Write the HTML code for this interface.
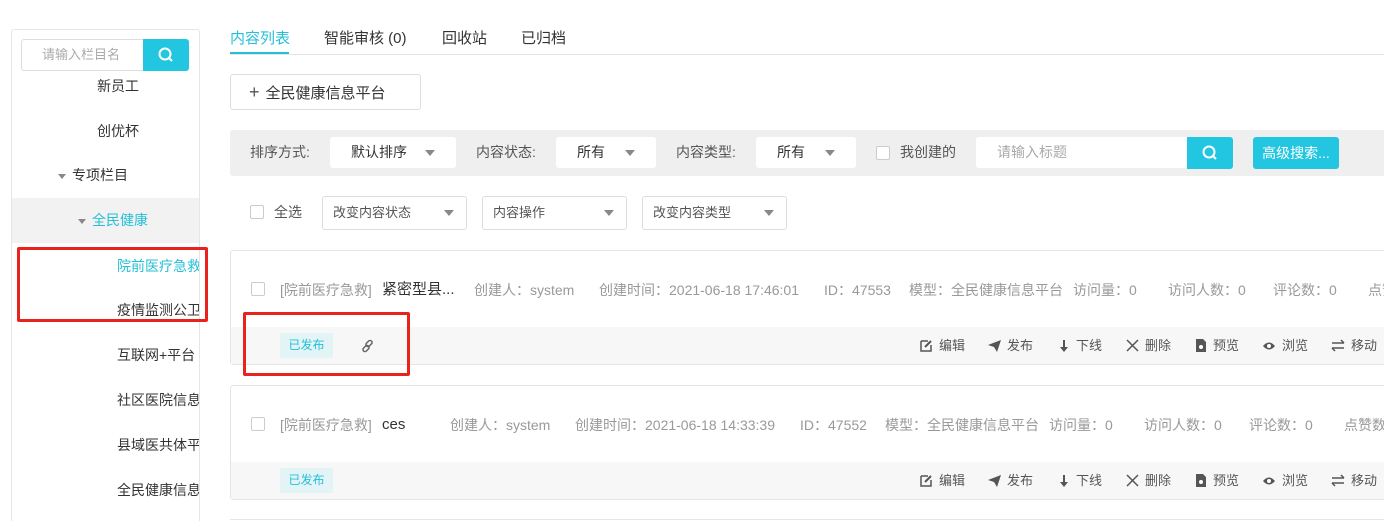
<!DOCTYPE html>
<html style="width:1384px;height:521px;overflow:hidden"><head><meta charset="utf-8"><style>
*{box-sizing:border-box;margin:0;padding:0}
body{width:1384px;height:521px;overflow:hidden;background:#fff;font-family:"Liberation Sans","Noto Sans CJK SC",sans-serif;font-size:14px;color:#333;position:relative}
.a{position:absolute;white-space:nowrap}
.sb{position:absolute;left:11px;top:29px;width:189px;height:492px;border:1px solid #e6e6e6;border-bottom:none;border-radius:3px 3px 0 0;overflow:hidden}
.sb .it{position:absolute;white-space:nowrap;font-size:14px;color:#333}
.tri{display:inline-block;width:0;height:0;border-left:4px solid transparent;border-right:4px solid transparent;border-top:5px solid #888;vertical-align:middle;margin-right:6px}
.sel{position:absolute;background:#fff;border-radius:3px;font-size:14px;color:#333}
.lab{position:absolute;top:137px;line-height:31px;color:#555;white-space:nowrap}
.sel2{position:absolute;background:#fff;border:1px solid #ddd;border-radius:3px;font-size:13px;color:#555}
.dd{position:absolute;width:0;height:0;border-left:5px solid transparent;border-right:5px solid transparent;border-top:6px solid #888;top:50%;margin-top:-3px}
.cb{position:absolute;width:14px;height:14px;border:1px solid #ccc;background:#fff;border-radius:2px}
.card{position:absolute;left:230px;width:1160px;height:115px;border:1px solid #e5e5e5;border-radius:3px}
.bar{position:absolute;left:0;right:0;bottom:0;height:37px;background:#f7f7f7}
.info{position:absolute;top:29px;line-height:20px;font-size:14px;color:#999;white-space:nowrap}
.tag{position:absolute;left:49px;top:6px;width:53px;height:25px;background:#e3f4f6;color:#25c0d8;font-size:12px;line-height:25px;text-align:center;border-radius:2px}
.act{position:absolute;top:0;line-height:37px;font-size:13px;color:#555;white-space:nowrap}
.act svg{vertical-align:-2px;margin-right:6px}
.red{position:absolute;border:3px solid #e8231d;border-radius:2px}
</style></head><body>
<div class="sb">
 <div class="a" style="left:9px;top:9px;width:123px;height:32px;border:1px solid #ddd;border-radius:3px 0 0 3px;color:#aaa;font-size:13px;line-height:30px;padding-left:20px">请输入栏目名</div>
 <div class="a" style="left:131px;top:9px;width:46px;height:32px;background:#22c6e0;border-radius:0 3px 3px 0"><svg width="46" height="32"><circle cx="22" cy="15" r="5.5" fill="none" stroke="#fff" stroke-width="2"/><line x1="26" y1="19" x2="29" y2="22" stroke="#fff" stroke-width="2"/></svg></div>
 <div class="it" style="left:85px;top:46px">新员工</div>
 <div class="it" style="left:85px;top:91px">创优杯</div>
 <div class="it" style="left:46px;top:135px"><span class="tri"></span>专项栏目</div>
 <div class="a" style="left:0;top:168px;width:189px;height:45px;background:#f2f2f2"></div>
 <div class="it" style="left:66px;top:180px;color:#25c0d8"><span class="tri"></span>全民健康</div>
 <div class="it" style="left:105px;top:226px;color:#25c0d8">院前医疗急救</div>
 <div class="it" style="left:105px;top:270px">疫情监测公卫</div>
 <div class="it" style="left:105px;top:315px">互联网+平台</div>
 <div class="it" style="left:105px;top:360px">社区医院信息</div>
 <div class="it" style="left:105px;top:405px">县域医共体平</div>
 <div class="it" style="left:105px;top:450px">全民健康信息</div>
</div>
<div class="red" style="left:17px;top:247px;width:191px;height:75px"></div>

<div class="a" style="left:230px;top:54px;width:1154px;height:1px;background:#e5e5e5"></div>
<div class="a" style="left:230px;top:52px;width:59px;height:2px;background:#25c0d8"></div>
<div class="a" style="left:230px;top:27px;font-size:15px;color:#25c0d8">内容列表</div>
<div class="a" style="left:324px;top:27px;font-size:15px">智能审核 (0)</div>
<div class="a" style="left:442px;top:27px;font-size:15px">回收站</div>
<div class="a" style="left:521px;top:27px;font-size:15px">已归档</div>

<div class="a" style="left:230px;top:74px;width:191px;height:36px;border:1px solid #ddd;border-radius:3px;font-size:15px;line-height:34px;padding-left:18px"><span style="font-size:18px;color:#555;margin-right:6px">+</span>全民健康信息平台</div>

<div class="a" style="left:230px;top:130px;width:1154px;height:46px;background:#efefef;border-radius:3px 0 0 3px"></div>
<div class="lab" style="left:250px">排序方式:</div>
<div class="sel" style="left:330px;top:137px;width:126px;height:31px;line-height:31px;padding-left:21px">默认排序<span class="dd" style="left:95px"></span></div>
<div class="lab" style="left:476px">内容状态:</div>
<div class="sel" style="left:556px;top:137px;width:100px;height:31px;line-height:31px;padding-left:21px">所有<span class="dd" style="left:69px"></span></div>
<div class="lab" style="left:676px">内容类型:</div>
<div class="sel" style="left:756px;top:137px;width:100px;height:31px;line-height:31px;padding-left:21px">所有<span class="dd" style="left:69px"></span></div>
<div class="cb" style="left:876px;top:146px"></div>
<div class="lab" style="left:900px">我创建的</div>
<div class="sel" style="left:976px;top:137px;width:212px;height:31px;line-height:31px;padding-left:21px;color:#aaa;border-radius:3px 0 0 3px">请输入标题</div>
<div class="a" style="left:1187px;top:137px;width:46px;height:32px;background:#22c6e0;border-radius:0 3px 3px 0"><svg width="46" height="32"><circle cx="22" cy="15" r="5.5" fill="none" stroke="#fff" stroke-width="2"/><line x1="26" y1="19" x2="29" y2="22" stroke="#fff" stroke-width="2"/></svg></div>
<div class="a" style="left:1253px;top:137px;width:86px;height:32px;background:#22c6e0;border-radius:3px;color:#fff;line-height:32px;text-align:center">高级搜索...</div>

<div class="cb" style="left:250px;top:205px"></div>
<div class="a" style="left:274px;top:196px;line-height:32px;color:#555">全选</div>
<div class="sel2" style="left:322px;top:196px;width:145px;height:34px;line-height:32px;padding-left:10px">改变内容状态<span class="dd" style="left:121px"></span></div>
<div class="sel2" style="left:482px;top:196px;width:145px;height:34px;line-height:32px;padding-left:10px">内容操作<span class="dd" style="left:121px"></span></div>
<div class="sel2" style="left:642px;top:196px;width:145px;height:34px;line-height:32px;padding-left:10px">改变内容类型<span class="dd" style="left:121px"></span></div>

<div class="card" style="top:250px">
 <div class="cb" style="left:20px;top:31px"></div>
 <div class="info" style="left:49px">[院前医疗急救]</div>
 <div class="info" style="left:151px;color:#333;font-size:15px">紧密型县...</div>
 <div class="info" style="left:243px">创建人：system</div>
 <div class="info" style="left:368px">创建时间：2021-06-18 17:46:01</div>
 <div class="info" style="left:593px">ID：47553</div>
 <div class="info" style="left:678px">模型：全民健康信息平台</div>
 <div class="info" style="left:842px">访问量：0</div>
 <div class="info" style="left:937px">访问人数：0</div>
 <div class="info" style="left:1042px">评论数：0</div>
 <div class="info" style="left:1137px">点赞数</div>
 <div class="bar">
  <div class="tag">已发布</div>
  <svg class="a" style="left:130px;top:12px" width="14" height="14" viewBox="0 0 14 14"><g fill="none" stroke="#666" stroke-width="1.5"><rect x="6" y="1" width="4" height="7" rx="2" transform="rotate(45 8 4.5)"/><rect x="3" y="6" width="4" height="7" rx="2" transform="rotate(45 5 9.5)"/></g></svg>
  <div class="act" style="left:689px"><svg width="13" height="13"><path d="M1 2h7M1 2v10h10V6" fill="none" stroke="#555" stroke-width="1.5"/><path d="M5 8l6-6" stroke="#555" stroke-width="2"/></svg>编辑</div>
  <div class="act" style="left:757px"><svg width="13" height="13"><path d="M0 6L13 1 9 13 6 8z" fill="#555"/></svg>发布</div>
  <div class="act" style="left:827px"><svg width="12" height="13"><path d="M6 1v8" stroke="#555" stroke-width="2"/><path d="M2 8h8l-4 5z" fill="#555"/></svg>下线</div>
  <div class="act" style="left:895px"><svg width="13" height="13"><path d="M1 1l11 11M12 1L1 12" stroke="#555" stroke-width="1.5"/></svg>删除</div>
  <div class="act" style="left:964px"><svg width="12" height="13"><path d="M1 0h7l3 3v10H1z" fill="#555"/><circle cx="6" cy="8" r="2" fill="#fff"/></svg>预览</div>
  <div class="act" style="left:1031px"><svg width="14" height="13"><path d="M1 7q6-7 12 0q-6 7-12 0z" fill="#555"/><circle cx="7" cy="7" r="2" fill="#fff"/></svg>浏览</div>
  <div class="act" style="left:1100px"><svg width="14" height="13"><path d="M1 4h12M10 1l3 3M13 9H1M4 12L1 9" stroke="#555" stroke-width="1.5" fill="none"/></svg>移动</div>
 </div>
</div>
<div class="red" style="left:243px;top:312px;width:167px;height:64px"></div>

<div class="card" style="top:385px">
 <div class="cb" style="left:20px;top:31px"></div>
 <div class="info" style="left:49px">[院前医疗急救]</div>
 <div class="info" style="left:151px;color:#333;font-size:15px">ces</div>
 <div class="info" style="left:219px">创建人：system</div>
 <div class="info" style="left:344px">创建时间：2021-06-18 14:33:39</div>
 <div class="info" style="left:569px">ID：47552</div>
 <div class="info" style="left:654px">模型：全民健康信息平台</div>
 <div class="info" style="left:818px">访问量：0</div>
 <div class="info" style="left:913px">访问人数：0</div>
 <div class="info" style="left:1018px">评论数：0</div>
 <div class="info" style="left:1113px">点赞数</div>
 <div class="bar">
  <div class="tag">已发布</div>
  <div class="act" style="left:689px"><svg width="13" height="13"><path d="M1 2h7M1 2v10h10V6" fill="none" stroke="#555" stroke-width="1.5"/><path d="M5 8l6-6" stroke="#555" stroke-width="2"/></svg>编辑</div>
  <div class="act" style="left:757px"><svg width="13" height="13"><path d="M0 6L13 1 9 13 6 8z" fill="#555"/></svg>发布</div>
  <div class="act" style="left:827px"><svg width="12" height="13"><path d="M6 1v8" stroke="#555" stroke-width="2"/><path d="M2 8h8l-4 5z" fill="#555"/></svg>下线</div>
  <div class="act" style="left:895px"><svg width="13" height="13"><path d="M1 1l11 11M12 1L1 12" stroke="#555" stroke-width="1.5"/></svg>删除</div>
  <div class="act" style="left:964px"><svg width="12" height="13"><path d="M1 0h7l3 3v10H1z" fill="#555"/><circle cx="6" cy="8" r="2" fill="#fff"/></svg>预览</div>
  <div class="act" style="left:1031px"><svg width="14" height="13"><path d="M1 7q6-7 12 0q-6 7-12 0z" fill="#555"/><circle cx="7" cy="7" r="2" fill="#fff"/></svg>浏览</div>
  <div class="act" style="left:1100px"><svg width="14" height="13"><path d="M1 4h12M10 1l3 3M13 9H1M4 12L1 9" stroke="#555" stroke-width="1.5" fill="none"/></svg>移动</div>
 </div>
</div>
<div class="a" style="left:230px;top:519px;width:1154px;height:2px;border-top:1px solid #e5e5e5"></div>
</body></html>
